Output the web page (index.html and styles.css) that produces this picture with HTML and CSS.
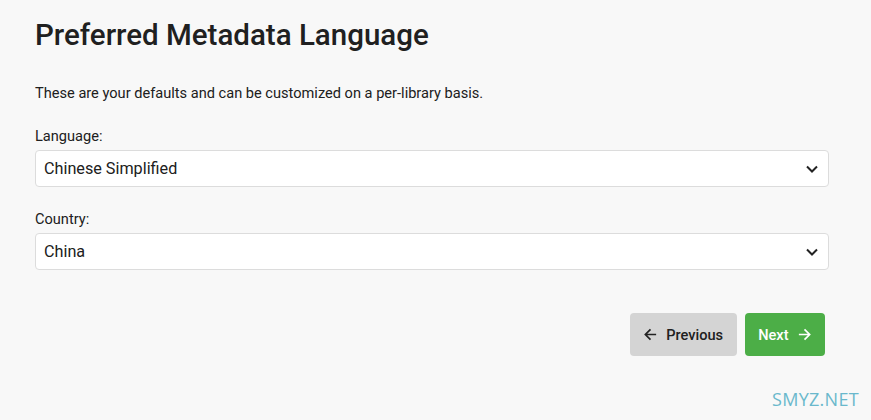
FILE: index.html
```html
<!DOCTYPE html>
<html lang="en">
<head>
    <meta charset="UTF-8">
    <meta name="viewport" content="width=device-width, initial-scale=1.0">
    <title>Preferred Metadata Language</title>
    <link rel="stylesheet" href="styles.css">
</head>
<body>
    <div class="wizard">
        <h1 class="title">Preferred Metadata Language</h1>
        <p class="hint">These are your defaults and can be customized on a per-library basis.</p>

        <div class="field">
            <label for="language">Language:</label>
            <div class="select-wrap">
                <select id="language">
                    <option>Chinese Simplified</option>
                </select>
                <svg class="chevron" viewBox="0 0 12 8" width="12" height="8"><path d="M1 1.5l5 5 5-5" fill="none" stroke="#222" stroke-width="2"/></svg>
            </div>
        </div>

        <div class="field">
            <label for="country">Country:</label>
            <div class="select-wrap">
                <select id="country">
                    <option>China</option>
                </select>
                <svg class="chevron" viewBox="0 0 12 8" width="12" height="8"><path d="M1 1.5l5 5 5-5" fill="none" stroke="#222" stroke-width="2"/></svg>
            </div>
        </div>

        <div class="actions">
            <button class="btn btn-prev">
                <svg viewBox="0 0 16 16" width="15" height="15"><path d="M14 8H2.5M8 2.5L2.5 8 8 13.5" fill="none" stroke="#222" stroke-width="1.8"/></svg>
                Previous
            </button>
            <button class="btn btn-next">
                Next
                <svg viewBox="0 0 16 16" width="15" height="15"><path d="M2 8h11.5M8 2.5L13.5 8 8 13.5" fill="none" stroke="#fff" stroke-width="1.8"/></svg>
            </button>
        </div>
    </div>

    <div class="watermark">SMYZ.NET</div>
</body>
</html>
```

FILE: styles.css
```css
body {
    margin: 0;
    background-color: #f8f8f8;
    font-family: Roboto, "Liberation Sans", sans-serif;
    color: #202020;
}
.wizard {
    padding: 16px 42px 0 35px;
}
.title {
    font-size: 29.5px;
    font-weight: 500;
    margin: 0;
    line-height: 38px;
}
.hint {
    font-size: 14.6px;
    margin: 29px 0 0;
    line-height: 20px;
}
.field {
    margin-top: 23px;
}
.field + .field {
    margin-top: 22px;
}
.field label {
    display: block;
    font-size: 14.6px;
    line-height: 20px;
    margin-bottom: 4px;
}
.select-wrap {
    position: relative;
}
select {
    display: block;
    width: 100%;
    height: 37px;
    appearance: none;
    background-color: #fff;
    border: 1px solid #dcdcdc;
    border-radius: 4px;
    padding: 0 8px;
    font-family: inherit;
    font-size: 16.2px;
    color: #202020;
}
.chevron {
    position: absolute;
    right: 11px;
    top: 15px;
    pointer-events: none;
}
.actions {
    display: flex;
    justify-content: flex-end;
    gap: 8px;
    margin-top: 43px;
    padding-right: 4px;
}
.btn {
    display: flex;
    align-items: center;
    gap: 8px;
    height: 43px;
    border: none;
    border-radius: 4px;
    padding: 0 13.5px;
    font-family: inherit;
    font-size: 14.6px;
    font-weight: 500;
    cursor: pointer;
}
.btn-prev {
    background-color: #d4d4d4;
    color: #202020;
}
.btn-next {
    background-color: #4cae47;
    color: #fff;
}
.watermark {
    position: absolute;
    right: 12px;
    bottom: 9px;
    font-family: "Open Sans", sans-serif;
    font-size: 18px;
    color: #6ab8cc;
    letter-spacing: 0.3px;
}
```
